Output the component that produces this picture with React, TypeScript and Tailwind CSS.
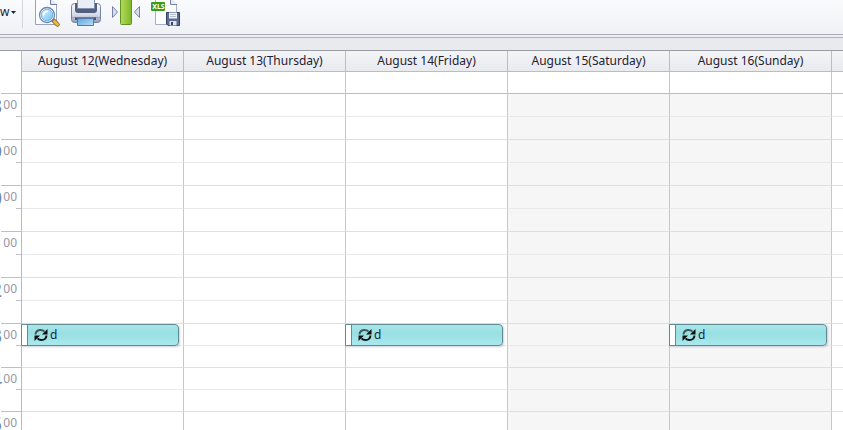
import React from 'react';
import { clsx } from 'clsx';

interface Day {
  label: string;
  weekend: boolean;
  event?: string;
}

interface HourRow {
  hour: number;
  height: string;
}

const days: Day[] = [
  { label: 'August 12(Wednesday)', weekend: false, event: 'd' },
  { label: 'August 13(Thursday)', weekend: false },
  { label: 'August 14(Friday)', weekend: false, event: 'd' },
  { label: 'August 15(Saturday)', weekend: true },
  { label: 'August 16(Sunday)', weekend: true, event: 'd' },
];

const EVENT_HOUR = 13;

const hours: HourRow[] = [
  { hour: 8, height: 'h-[23px]' },
  { hour: 9, height: 'h-[23px]' },
  { hour: 10, height: 'h-[23px]' },
  { hour: 11, height: 'h-[23px]' },
  { hour: 12, height: 'h-[23px]' },
  { hour: 13, height: 'h-[22px]' },
  { hour: 14, height: 'h-[22px]' },
  { hour: 15, height: 'h-[22px]' },
];

const PreviewIcon = () => (
  <svg width="28" height="28" viewBox="34 0 28 28" aria-hidden="true">
    <defs>
      <linearGradient id="lens" x1="0" y1="0" x2="1" y2="1">
        <stop offset="0" stopColor="#e9f8ff" />
        <stop offset="1" stopColor="#6fbcf0" />
      </linearGradient>
    </defs>
    <path d="M35.5 -2V24.5H56.5V5L50 -2Z" fill="#fbfcfe" stroke="#9aa3bd" />
    <path d="M50.5 -2V4.5H57" fill="#e6eaf4" stroke="#6f7ba0" />
    <path d="M52.500 19.500L57.500 24.500" stroke="#8a6a2c" strokeWidth="4.500" strokeLinecap="round" />
    <path d="M54 21L57.500 24.500" stroke="#f2b93e" strokeWidth="2.600" strokeLinecap="round" />
    <path d="M51 18.500L53.500 20.500" stroke="#56638c" strokeWidth="2.500" />
    <circle cx="47" cy="15" r="7.500" fill="#fff" stroke="#6c86b4" strokeWidth="1.300" />
    <circle cx="47" cy="15" r="5.800" fill="url(#lens)" stroke="#5ba5da" strokeWidth="0.800" />
    <path d="M43.500 15.500C43.500 12.500 45.500 11 48 11.500" fill="none" stroke="#fff" strokeWidth="1.400" />
  </svg>
);

const PrintIcon = () => (
  <svg width="32" height="28" viewBox="70 0 32 28" aria-hidden="true">
    <defs>
      <linearGradient id="printer" x1="0" y1="0" x2="0" y2="1">
        <stop offset="0" stopColor="#fafbfd" />
        <stop offset="0.600" stopColor="#d5dae7" />
        <stop offset="1" stopColor="#8e98b5" />
      </linearGradient>
      <linearGradient id="sheet" x1="0" y1="0" x2="1" y2="1">
        <stop offset="0" stopColor="#5da4df" />
        <stop offset="1" stopColor="#b9e0fa" />
      </linearGradient>
    </defs>
    <rect x="71.500" y="3.500" width="29" height="19" rx="3" fill="url(#printer)" stroke="#7783a5" />
    <path d="M75 3H97V10Q97 13 94 13H78Q75 13 75 10Z" fill="#535d7c" />
    <path d="M77.500 -2H94.500V8.500H77.500Z" fill="#e9edf6" stroke="#8290b2" />
    <path d="M72 17.500H100" stroke="#98a2bb" />
    <path d="M75 17.500H96V20H75Z" fill="#465170" />
    <path d="M77.500 18.500H93.500V25.500H77.500Z" fill="url(#sheet)" stroke="#5478a8" />
  </svg>
);

const FitWidthIcon = () => (
  <svg width="30" height="28" viewBox="111 0 30 28" aria-hidden="true">
    <defs>
      <linearGradient id="bar" x1="0" y1="0" x2="1" y2="0">
        <stop offset="0" stopColor="#b3db59" />
        <stop offset="1" stopColor="#7fb62a" />
      </linearGradient>
    </defs>
    <rect x="120.500" y="-3" width="11" height="27.500" rx="1" fill="url(#bar)" stroke="#5f9420" />
    <path d="M112.500 6.500L117.500 12L112.500 17.500Z" fill="#d8deec" stroke="#7784a8" />
    <path d="M139.500 6.500L134.500 12L139.500 17.500Z" fill="#d8deec" stroke="#7784a8" />
  </svg>
);

const ExportIcon = () => (
  <span className="relative block h-7 w-[30px]">
    <svg width="30" height="28" viewBox="151 0 30 28" aria-hidden="true">
      <path d="M155.500 -2V24.500H176.500V5L170 -2Z" fill="#fbfcfe" stroke="#a5aec5" />
      <path d="M170.500 -2V4.500H177" fill="#e6eaf4" stroke="#7783a5" />
      <rect x="151" y="2" width="14" height="9" rx="1" fill="#3c9a1c" />
      <path d="M166.500 12.500H179.500V25.500H168L166.500 24Z" fill="#5b6a91" stroke="#36415f" />
      <path d="M169 12.500H177V18.500H169Z" fill="#eef2fa" />
      <path d="M170 14.500H176M170 16.500H176" stroke="#b6bfd4" />
      <path d="M169.500 21H176.500V25.500H169.500Z" fill="#dfe4f0" />
      <path d="M171 22H173V25H171Z" fill="#36415f" />
    </svg>
    <span className="absolute top-[2px] left-0 w-[14px] text-center text-[7px] leading-[9px] font-bold text-white">XLS</span>
  </span>
);

const RecurrenceIcon = () => (
  <svg width="14" height="14" viewBox="0 0 14 14" aria-hidden="true" className="shrink-0">
    <path d="M1.500 6.500C1.800 3.500 4 2 6.500 2C8.300 2 9.600 2.600 10.500 3.600" fill="none" stroke="#44575a" strokeWidth="2" />
    <path d="M13.500 1V6.500H8Z" fill="#111" />
    <path d="M12.500 7.500C12.200 10.500 10 12 7.500 12C5.700 12 4.400 11.400 3.500 10.400" fill="none" stroke="#111" strokeWidth="2" />
    <path d="M0.500 13V7.500H6Z" fill="#111" />
  </svg>
);

const Toolbar = () => (
  <div className="flex h-[35px] items-start overflow-hidden border-b border-[#a9abb4] bg-linear-to-b from-[#fafbfd] to-[#f0f1f6]">
    <button type="button" className="flex h-6 items-center gap-[2px] text-[#1e2234]">
      <span>w</span>
      <svg width="5" height="3" viewBox="0 0 5 3" aria-hidden="true">
        <path d="M0 0H5L2.500 3Z" fill="#1e2234" />
      </svg>
    </button>
    <div className="ml-[6px] h-7 w-px bg-[#d3d5dd]" />
    <button type="button" aria-label="Print preview" className="ml-[11px]">
      <PreviewIcon />
    </button>
    <button type="button" aria-label="Print" className="ml-2">
      <PrintIcon />
    </button>
    <button type="button" aria-label="Fit width" className="ml-[9px]">
      <FitWidthIcon />
    </button>
    <button type="button" aria-label="Export to XLS" className="ml-[10px]">
      <ExportIcon />
    </button>
  </div>
);

const EventCard = ({ title }: { title: string }) => (
  <button
    type="button"
    className="absolute top-0 right-1 -left-px z-10 flex h-[22px] overflow-hidden rounded-r-[4px] border border-[#5f8c92] bg-linear-to-b from-[#a9e7ea] via-[#98dfe2] via-40% to-[#a9e9ee] text-left shadow-[1px_1px_2px_rgba(90,100,130,0.3)]"
  >
    <span className="h-full w-[6px] border-r border-[#5f8c92] bg-white" />
    <span className="flex h-full items-center gap-[2px] pl-[6px] text-[#16283a]">
      <RecurrenceIcon />
      {title}
    </span>
  </button>
);

interface SlotRowProps {
  row: HourRow;
  half: boolean;
}

const SlotRow = ({ row, half }: SlotRowProps) => (
  <tr className={row.height}>
    <th className="relative border-r border-[#b9bac2] p-0 align-top font-normal">
      {!half && (
        <div className="flex h-[21px] items-start justify-end gap-px overflow-hidden pr-1 text-[#9698a6]">
          <span className="text-[20px] leading-6 text-[#7388a8]">{row.hour}</span>
          <span className="pt-1 leading-[14px]">00</span>
        </div>
      )}
      {/* tick under the slot */}
      <div className={clsx('absolute right-0 bottom-0 h-px bg-[#bfc0c7]', half ? 'w-5' : 'w-[5px]')} />
    </th>
    {days.map((day) => (
      <td
        key={day.label}
        className={clsx(
          'relative border-r border-b border-r-[#c6c7ce] p-0',
          half ? 'border-b-[#dfdfe2]' : 'border-b-[#e9e9eb]',
          day.weekend ? 'bg-[#f6f6f6]' : 'bg-white'
        )}
      >
        {day.event && !half && row.hour === EVENT_HOUR && <EventCard title={day.event} />}
      </td>
    ))}
    <td className={clsx('border-b bg-white p-0', half ? 'border-b-[#dfdfe2]' : 'border-b-[#e9e9eb]')} />
  </tr>
);

const Scheduler = () => (
  <table className="w-full table-fixed border-separate border-spacing-0 border-t border-[#9a9ca6] bg-white">
    <colgroup>
      <col className="w-[22px]" />
      {days.map((day) => (
        <col key={day.label} />
      ))}
      <col className="w-[11px]" />
    </colgroup>
    <thead>
      <tr className="h-[21px]">
        <th className="border-r border-[#b9bac2] p-0" />
        {days.map((day) => (
          <th
            key={day.label}
            scope="col"
            className="border-r border-b border-[#bbbcc4] bg-linear-to-b from-[#f3f4f6] to-[#e9eaee] p-0 text-center leading-5 font-normal whitespace-nowrap text-[#1e2234]"
          >
            {day.label}
          </th>
        ))}
        <th className="border-b border-[#bbbcc4] bg-linear-to-b from-[#f3f4f6] to-[#e9eaee] p-0" />
      </tr>
    </thead>
    <tbody>
      {/* all-day area */}
      <tr className="h-[22px]">
        <th className="relative border-r border-[#b9bac2] p-0">
          <div className="absolute right-0 bottom-0 h-px w-5 bg-[#bfc0c7]" />
        </th>
        {days.map((day) => (
          <td key={day.label} className="border-r border-b border-r-[#c6c7ce] border-b-[#bbbcc4] p-0" />
        ))}
        <td className="border-b border-[#bbbcc4] p-0" />
      </tr>
      {hours.map((row) => (
        <React.Fragment key={row.hour}>
          <SlotRow row={row} half={false} />
          <SlotRow row={row} half />
        </React.Fragment>
      ))}
    </tbody>
  </table>
);

const App: React.FC = () => {
  return (
    <div className="h-screen overflow-hidden bg-white font-['Noto_Sans','Open_Sans',sans-serif] text-[12px]">
      <Toolbar />
      <div className="h-[2px] bg-[#eeeff3]" />
      <div className="h-[13px] border-t border-[#b3b5be] bg-[#e9eaee]" />
      <Scheduler />
    </div>
  );
};

export default App;
